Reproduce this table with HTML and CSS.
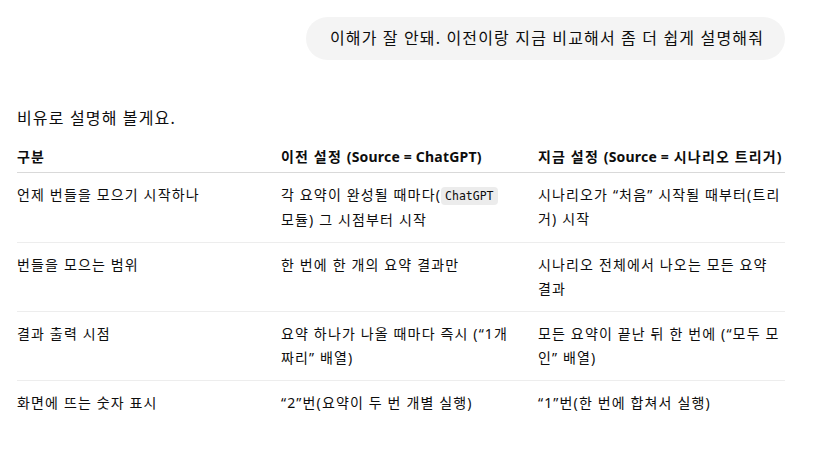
FILE: index.html
```html
<!DOCTYPE html>
<html lang="ko">
<head>
<meta charset="utf-8">
<link rel="stylesheet" href="styles.css">
</head>
<body>
<div class="chat">
  <div class="user-row">
    <div class="bubble">이해가 잘 안돼. 이전이랑 지금 비교해서 좀 더 쉽게 설명해줘</div>
  </div>
  <p class="lead">비유로 설명해 볼게요.</p>
  <table class="compare">
    <colgroup>
      <col class="c1"><col class="c2"><col class="c3">
    </colgroup>
    <thead>
      <tr><th>구분</th><th>이전 설정 <span class="lat">(Source = ChatGPT)</span></th><th>지금 설정 <span class="lat">(Source =</span> 시나리오 트리거<span class="lat">)</span></th></tr>
    </thead>
    <tbody>
      <tr><td>언제 번들을 모으기 시작하나</td><td class="mid">각 요약이 완성될 때마다(<code>ChatGPT</code> 모듈) 그 시점부터 시작</td><td>시나리오가 “처음” 시작될 때부터(트리거) 시작</td></tr>
      <tr><td>번들을 모으는 범위</td><td class="mid">한 번에 한 개의 요약 결과만</td><td>시나리오 전체에서 나오는 모든 요약 결과</td></tr>
      <tr><td>결과 출력 시점</td><td class="mid">요약 하나가 나올 때마다 즉시 (“1개짜리” 배열)</td><td>모든 요약이 끝난 뒤 한 번에 (“모두 모인” 배열)</td></tr>
      <tr><td>화면에 뜨는 숫자 표시</td><td class="mid">“2”번(요약이 두 번 개별 실행)</td><td>“1”번(한 번에 합쳐서 실행)</td></tr>
    </tbody>
  </table>
</div>
</body>
</html>
```

FILE: styles.css
```css
* { box-sizing: border-box; }
html, body { margin: 0; padding: 0; background: #ffffff; }
body {
  font-family: "Noto Sans", "Noto Sans CJK KR", sans-serif;
  color: #0d0d0d;
}
.chat {
  padding: 17px 38px 0 17px;
}
.user-row {
  display: flex;
  justify-content: flex-end;
}
.bubble {
  background: #f4f4f4;
  border-radius: 22px;
  padding: 10px 21px 10px 24px;
  font-size: 16px;
  line-height: 23px;
  letter-spacing: 1.15px;
}
.lead {
  margin: 46px 0 0;
  font-size: 16px;
  line-height: 24px;
  letter-spacing: 1.15px;
}
.compare {
  margin-top: 15px;
  width: 768px;
  table-layout: fixed;
  border-collapse: collapse;
  font-size: 14px;
  line-height: 24px;
  letter-spacing: 1.15px;
}
.c1 { width: 264px; }
.c2 { width: 257px; }
.c3 { width: 247px; }
.compare th {
  text-align: left;
  font-weight: 700;
  padding: 0 16px 3px 0;
  border-bottom: 1px solid #d9d9d9;
}
.lat { letter-spacing: 0.2px; }
.compare td {
  vertical-align: top;
  padding: 10px 12px 10px 0;
  border-bottom: 1px solid #ededed;
}
.compare td.mid { padding-right: 27px; }
.compare tbody tr:last-child td { border-bottom: none; }
.compare th:last-child, .compare td:last-child { padding-right: 0; }
code {
  font-family: "DejaVu Sans Mono", "Liberation Mono", monospace;
  font-size: 11.5px;
  letter-spacing: 0;
  background: #ececec;
  border-radius: 4px;
  padding: 2px 4px;
}
```
